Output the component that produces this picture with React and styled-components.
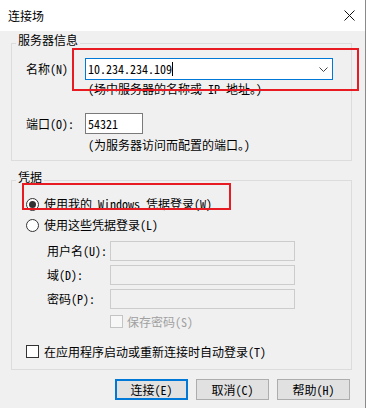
import React from 'react'
import styled, { createGlobalStyle } from 'styled-components'

const GlobalStyle = createGlobalStyle`
  html, body {
    margin: 0;
    padding: 0;
    background: #fff;
  }
  body {
    font-family: "Noto Sans Mono CJK SC", "Noto Sans CJK SC", monospace;
    font-size: 12px;
    color: #000;
  }
`

const mono = `"Noto Sans Mono CJK SC", "Noto Sans CJK SC", monospace`
const ui = `"Noto Sans CJK SC", "Noto Sans", sans-serif`

const Window = styled.div`
  position: relative;
  width: 365px;
  height: 408px;
  background: #f0f0f0;
  border-right: 1px solid #8a8a8a;
  overflow: hidden;
`

const TitleBar = styled.div`
  height: 31px;
  background: #fff;
  display: flex;
  align-items: center;
  justify-content: space-between;
  padding: 0 10px 0 8px;
`

const Title = styled.span`
  font-family: ${ui};
  font-size: 12px;
  line-height: 14px;
  margin-top: 1px;
`

const Body = styled.div`
  padding: 2px 13px 0 11px;
`

const Group = styled.fieldset`
  margin: ${p => p.$top || 0}px 0 0 0;
  border: 1px solid #dcdcdc;
  padding: 0 0 ${p => p.$bottom}px 4px;
  min-width: 0;
`

const Legend = styled.legend`
  font-family: ${ui};
  font-size: 12px;
  line-height: 14px;
  padding: 0 2px 6px 2px;
`

const Row = styled.div`
  display: flex;
  align-items: center;
  height: ${p => p.$h}px;
  margin-top: ${p => p.$mt}px;
  margin-left: ${p => p.$ml}px;
`

const Label = styled.span`
  width: ${p => p.$w}px;
  flex: none;
  line-height: 14px;
  white-space: pre;
`

const Combo = styled.div`
  box-sizing: border-box;
  width: 248px;
  height: 22px;
  background: #fff;
  border: 1px solid #0078d7;
  display: flex;
  align-items: center;
  justify-content: space-between;
  padding: 0 4px 0 2px;
`

const ComboText = styled.span`
  display: flex;
  align-items: center;
  line-height: 14px;
`

const Caret = styled.span`
  display: inline-block;
  width: 1px;
  height: 14px;
  background: #000;
`

const TextBox = styled.div`
  box-sizing: border-box;
  width: ${p => p.$w}px;
  height: ${p => p.$h}px;
  background: ${p => (p.$disabled ? '#f0f0f0' : '#fff')};
  border: 1px solid ${p => (p.$disabled ? '#cccccc' : '#7a7a7a')};
  padding: 0 2px;
  display: flex;
  align-items: center;
  line-height: 14px;
`

const Hint = styled.div`
  line-height: 14px;
  margin-top: ${p => p.$mt}px;
  margin-left: ${p => p.$ml}px;
  white-space: pre;
`

const Radio = styled.span`
  box-sizing: border-box;
  width: 13px;
  height: 13px;
  border-radius: 50%;
  border: 1px solid #333;
  background: #fff;
  display: flex;
  align-items: center;
  justify-content: center;
  flex: none;
  margin-right: 5px;

  &::after {
    content: '';
    display: ${p => (p.$checked ? 'block' : 'none')};
    width: 7px;
    height: 7px;
    border-radius: 50%;
    background: #333;
  }
`

const Check = styled.span`
  box-sizing: border-box;
  width: 13px;
  height: 13px;
  flex: none;
  border: 1px solid ${p => (p.$disabled ? '#c4c4c4' : '#333')};
  background: ${p => (p.$disabled ? '#f7f7f7' : '#fff')};
  margin-right: ${p => p.$gap}px;
`

const OptionText = styled.span`
  line-height: 14px;
  white-space: pre;
  color: ${p => (p.$disabled ? '#a0a0a0' : '#000')};
`

const Fields = styled.div`
  display: flex;
  flex-direction: column;
  gap: 4px;
  margin-top: 6px;
  margin-left: 31px;
`

const FieldRow = styled.div`
  display: flex;
  align-items: center;
  height: 20px;
`

const Buttons = styled.div`
  display: flex;
  justify-content: flex-end;
  gap: 8px;
  margin: 9px 2px 0 0;
`

const Button = styled.button`
  box-sizing: border-box;
  width: 73px;
  height: 21px;
  padding: 0;
  font-family: ${mono};
  font-size: 12px;
  line-height: 14px;
  color: #000;
  background: #e1e1e1;
  border: ${p => (p.$primary ? '2px solid #0078d7' : '1px solid #adadad')};
`

// red annotation frames drawn over the dialog
const Mark = styled.div`
  position: absolute;
  left: ${p => p.$x}px;
  top: ${p => p.$y}px;
  width: ${p => p.$w}px;
  height: ${p => p.$h}px;
  box-sizing: border-box;
  border: 2px solid #e81b23;
  pointer-events: none;
`

function CloseIcon() {
  return (
    <svg width="11" height="11" viewBox="0 0 11 11">
      <path d="M0.5 0.5 L10.5 10.5 M10.5 0.5 L0.5 10.5" stroke="#111" strokeWidth="1" fill="none" />
    </svg>
  )
}

function Chevron() {
  return (
    <svg width="9" height="5" viewBox="0 0 9 5">
      <path d="M0.5 0.5 L4.5 4.5 L8.5 0.5" stroke="#444" strokeWidth="1" fill="none" />
    </svg>
  )
}

export default function App() {
  return (
    <>
      <GlobalStyle />
      <Window>
        <TitleBar>
          <Title>连接场</Title>
          <CloseIcon />
        </TitleBar>

        <Body>
          <Group $bottom={8}>
            <Legend>服务器信息</Legend>
            <Row $h={22} $mt={5} $ml={10}>
              <Label $w={59}>名称(N)</Label>
              <Combo>
                <ComboText>10.234.234.109<Caret /></ComboText>
                <Chevron />
              </Combo>
            </Row>
            <Hint $mt={2} $ml={72}>(场中服务器的名称或 IP 地址。)</Hint>
            <Row $h={21} $mt={17} $ml={10}>
              <Label $w={59}>端口(O):</Label>
              <TextBox $w={58} $h={21}>54321</TextBox>
            </Row>
            <Hint $mt={4} $ml={72}>(为服务器访问而配置的端口。)</Hint>
          </Group>

          <Group $top={9} $bottom={11}>
            <Legend>凭据</Legend>
            <Row $h={20} $mt={4} $ml={10}>
              <Radio $checked />
              <OptionText>使用我的 Windows 凭据登录(W)</OptionText>
            </Row>
            <Row $h={20} $mt={1} $ml={10}>
              <Radio />
              <OptionText>使用这些凭据登录(L)</OptionText>
            </Row>
            <Fields>
              <FieldRow>
                <Label $w={63}>用户名(U):</Label>
                <TextBox $w={185} $h={20} $disabled />
              </FieldRow>
              <FieldRow>
                <Label $w={63}>域(D):</Label>
                <TextBox $w={185} $h={20} $disabled />
              </FieldRow>
              <FieldRow>
                <Label $w={63}>密码(P):</Label>
                <TextBox $w={185} $h={20} $disabled />
              </FieldRow>
            </Fields>
            <Row $h={13} $mt={6} $ml={94}>
              <Check $disabled $gap={4} />
              <OptionText $disabled>保存密码(S)</OptionText>
            </Row>
            <Row $h={13} $mt={17} $ml={10}>
              <Check $gap={5} />
              <OptionText>在应用程序启动或重新连接时自动登录(T)</OptionText>
            </Row>
          </Group>

          <Buttons>
            <Button $primary>连接(E)</Button>
            <Button>取消(C)</Button>
            <Button>帮助(H)</Button>
          </Buttons>
        </Body>

        <Mark $x={72} $y={48} $w={287} $h={43} />
        <Mark $x={22} $y={183} $w={209} $h={27} />
      </Window>
    </>
  )
}
